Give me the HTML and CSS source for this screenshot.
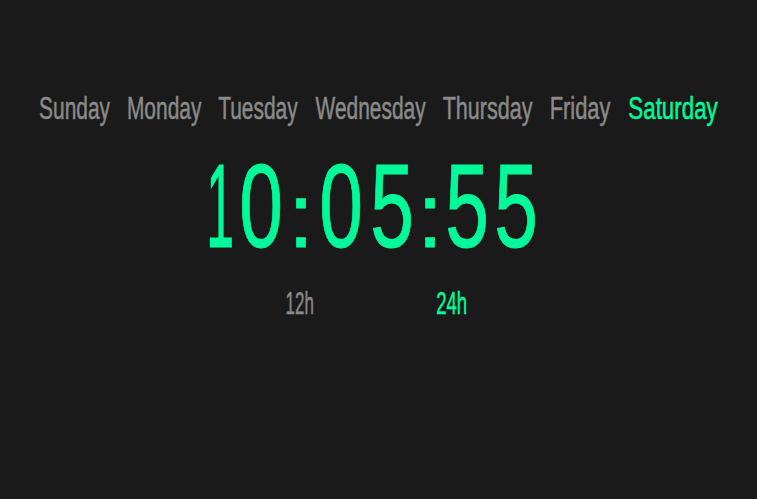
FILE: index.html
```
<!DOCTYPE html>
<html lang="en">
<head>
<meta charset="utf-8">
<title>Clock</title>
<link rel="stylesheet" href="styles.css">
</head>
<body>
<div class="app">
  <div class="days">
    <div class="day w-sun"><span>Sunday</span></div>
    <div class="day w-mon"><span>Monday</span></div>
    <div class="day w-tue"><span>Tuesday</span></div>
    <div class="day w-wed"><span>Wednesday</span></div>
    <div class="day w-thu"><span>Thursday</span></div>
    <div class="day w-fri"><span>Friday</span></div>
    <div class="day w-sat active"><span>Saturday</span></div>
  </div>
  <div class="clock">
    <div class="ch w-one"><span>1</span></div>
    <div class="ch w-zero"><span>0</span></div>
    <div class="ch w-colon"><span>:</span></div>
    <div class="ch w-zero"><span>0</span></div>
    <div class="ch w-five"><span>5</span></div>
    <div class="ch w-colon"><span>:</span></div>
    <div class="ch w-five"><span>5</span></div>
    <div class="ch w-five"><span>5</span></div>
  </div>
  <div class="modes">
    <div class="mode w-12"><span>12h</span></div>
    <div class="mode w-24 active"><span>24h</span></div>
  </div>
</div>
</body>
</html>
```
FILE: styles.css
```
html, body {
  margin: 0;
  padding: 0;
  background: #1a1a1a;
  overflow: hidden;
}

body {
  width: 757px;
  height: 499px;
  font-family: "Liberation Sans", Arial, sans-serif;
}

.app {
  display: flex;
  flex-direction: column;
  align-items: stretch;
  padding-top: 89px;
}

/* shared: cells centre a horizontally condensed glyph/word */
.day, .ch, .mode {
  display: flex;
  justify-content: center;
  white-space: nowrap;
}

.day > span, .ch > span, .mode > span {
  display: inline-block;
  flex: none;
}

/* ---------- days ---------- */
.days {
  display: flex;
  justify-content: center;
  gap: 17px;
  height: 40px;
  font-size: 31px;
  line-height: 40px;
  color: #8a8a8a;
  -webkit-text-stroke: 0.5px currentColor;
}

.day > span {
  transform: scaleX(0.675);
}

.day.active {
  color: #00fa9a;
}

.w-sun { width: 71px; }
.w-mon { width: 74px; }
.w-tue { width: 80px; }
.w-wed { width: 111px; }
.w-thu { width: 90px; }
.w-fri { width: 61px; }
.w-sat { width: 90px; }

.w-thu > span { transform: scaleX(0.695); }
.w-fri > span { transform: scaleX(0.705); }
.w-sat > span { transform: scaleX(0.72); }

/* ---------- clock ---------- */
.clock {
  display: flex;
  justify-content: center;
  align-items: flex-end;
  gap: 17px;
  height: 110px;
  margin-top: 22px;
  padding-right: 10px;
  font-size: 119px;
  line-height: 110px;
  color: #00fa9a;
  -webkit-text-stroke: 1px currentColor;
}

.ch > span {
  transform: scaleX(0.66);
}

.w-one { width: 11px; }
.w-one > span { transform: scaleX(0.42); }
.w-zero { width: 37px; }
.w-five { width: 32px; }
.w-colon {
  width: 9px;
  font-size: 90px;
  line-height: 90px;
}
.w-colon > span { transform: none; }

/* ---------- 12h / 24h ---------- */
.modes {
  display: flex;
  justify-content: center;
  gap: 122px;
  height: 40px;
  margin-top: 22px;
  padding-right: 4px;
  font-size: 32px;
  line-height: 40px;
  color: #8a8a8a;
  -webkit-text-stroke: 0.5px currentColor;
}

.mode > span {
  transform: scaleX(0.53);
}

.mode.active {
  color: #00fa9a;
}

.w-12 { width: 28px; }
.w-24 { width: 32px; }
.w-24 > span { transform: scaleX(0.58); }
```
